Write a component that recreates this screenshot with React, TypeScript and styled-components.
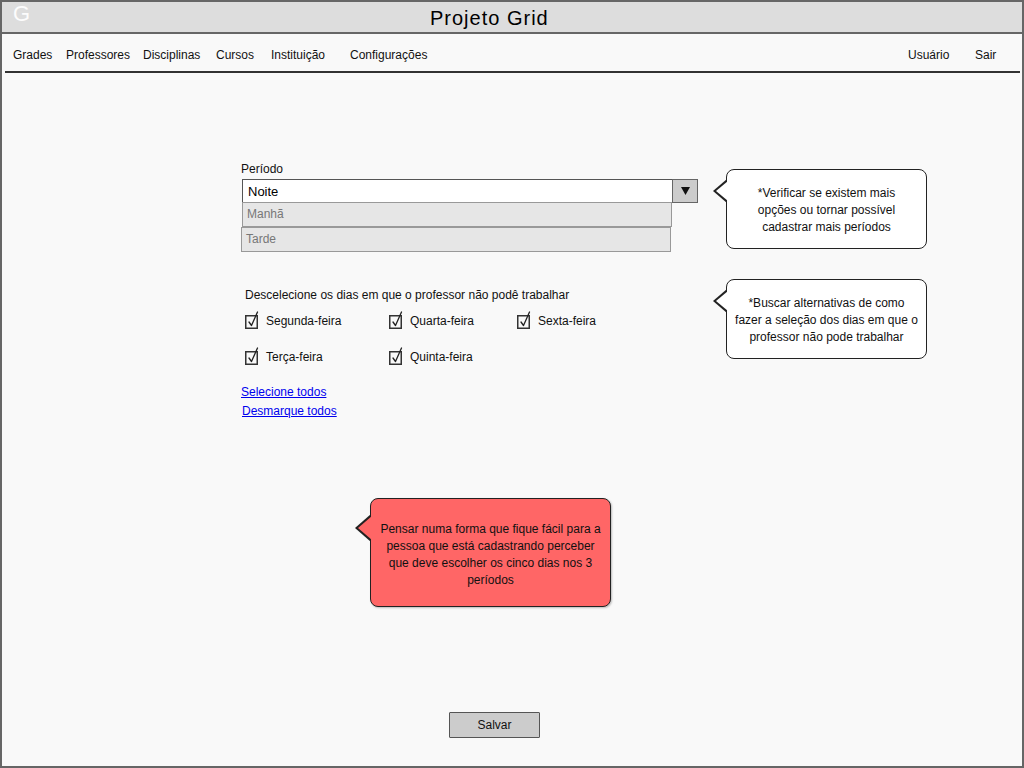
import React from 'react';
import styled, { createGlobalStyle } from 'styled-components';

const Global = createGlobalStyle`
  html, body { margin: 0; padding: 0; background: #f9f9f9; }
  body { font-family: "Liberation Sans", Arial, sans-serif; color: #111; font-size: 12px; }
  * { box-sizing: border-box; }
`;

const Frame = styled.div`
  width: 1024px;
  height: 768px;
  border: 2px solid #666;
  background: #f9f9f9;
  display: flex;
  flex-direction: column;
`;

const TitleBar = styled.header`
  height: 32px;
  flex: none;
  background: #dddddd;
  border-bottom: 2px solid #666;
  display: flex;
  align-items: center;
  padding-left: 11px;
`;

const Logo = styled.span`
  font-size: 22px;
  color: #fcfcfc;
  line-height: 1;
  width: 16px;
  margin-top: -6px;
`;

const Title = styled.h1`
  margin: 0 0 0 401px;
  font-size: 20px;
  font-weight: normal;
  letter-spacing: 1px;
  line-height: 1;
  color: #000;
  padding-top: 2px;
`;

const Nav = styled.nav`
  height: 39px;
  flex: none;
  display: flex;
  align-items: center;
  padding: 4px 0 0 8px;
  margin: 0 2px 0 3px;
  border-bottom: 2px solid #333;
`;

const NavItem = styled.span<{ $w: number }>`
  width: ${p => p.$w}px;
  flex: none;
  white-space: nowrap;
  font-size: 12px;
  color: #111;
`;

const NavRight = styled.div`
  margin-left: auto;
  display: flex;
`;

const Main = styled.main`
  flex: 1;
  display: flex;
  flex-direction: column;
  padding: 89px 0 0 240px;
`;

const Row = styled.section<{ $mt?: number }>`
  display: grid;
  grid-template-columns: 456px 201px;
  column-gap: 28px;
  align-items: start;
  margin-top: ${p => p.$mt ?? 0}px;
`;

const Field = styled.div`
  display: flex;
  flex-direction: column;
`;

const Label = styled.label`
  line-height: 15px;
  margin-left: -1px;
  margin-bottom: 2px;
`;

const SelectBox = styled.div`
  display: flex;
  height: 24px;
`;

const SelectValue = styled.div`
  flex: 1;
  background: #fff;
  border: 1px solid #555;
  border-right: none;
  padding: 2px 0 0 5px;
  font-size: 13px;
  line-height: 20px;
  color: #000;
`;

const ArrowBtn = styled.div`
  width: 26px;
  background: #cccccc;
  border: 1.5px solid #666;
  display: flex;
  align-items: center;
  justify-content: center;
`;

const Option = styled.div<{ $shift?: number; $overlap?: boolean }>`
  width: 430px;
  height: 25px;
  margin-top: ${p => (p.$overlap ? -1 : 0)}px;
  margin-left: ${p => p.$shift ?? 0}px;
  background: #e6e6e6;
  border: 1px solid #999;
  padding-left: 4px;
  font-size: 12px;
  line-height: 23px;
  color: #777;
`;

const Callout = styled.div<{ $mt?: number }>`
  position: relative;
  margin-top: ${p => p.$mt ?? 0}px;
  height: 80px;
  padding-top: 3px;
  background: #fff;
  border: 1.5px solid #222;
  border-radius: 8px;
  display: flex;
  align-items: center;
  justify-content: center;
  text-align: center;
  line-height: 17px;
  font-size: 12px;
  color: #111;

  &::before {
    content: '';
    position: absolute;
    left: -14px;
    top: 9px;
    border-right: 14px solid #222;
    border-top: 12px solid transparent;
    border-bottom: 12px solid transparent;
  }
  &::after {
    content: '';
    position: absolute;
    left: -11.5px;
    top: 10.5px;
    border-right: 12.5px solid #fff;
    border-top: 10.5px solid transparent;
    border-bottom: 10.5px solid transparent;
  }
`;

const Days = styled.div`
  display: flex;
  flex-direction: column;
  padding-top: 9px;
`;

const DaysTitle = styled.div`
  line-height: 15px;
  margin-left: 3px;
`;

const CheckGrid = styled.div`
  display: grid;
  grid-template-columns: 144px 128px 120px;
  row-gap: 20px;
  margin: 10px 0 0 3px;
`;

const CheckItem = styled.label`
  display: flex;
  align-items: flex-end;
  height: 16px;
  gap: 5px;
  line-height: 15px;
  white-space: nowrap;
`;

const LinkList = styled.div`
  display: flex;
  flex-direction: column;
  gap: 4px;
  margin-top: 20px;
`;

const TextLink = styled.a<{ $shift?: number }>`
  color: #0000ee;
  text-decoration: underline;
  line-height: 15px;
  margin-left: ${p => p.$shift ?? 0}px;
  cursor: pointer;
`;

const Warning = styled.div`
  position: relative;
  margin: 79px 0 0 128px;
  width: 241px;
  height: 109px;
  padding-top: 5px;
  background: #ff6666;
  border: 1.5px solid #222;
  border-radius: 8px;
  box-shadow: 1px 1px 2px rgba(0,0,0,0.25);
  display: flex;
  align-items: center;
  justify-content: center;
  text-align: center;
  line-height: 17px;
  font-size: 12px;
  color: #111;

  &::before {
    content: '';
    position: absolute;
    left: -16px;
    top: 15px;
    border-right: 16px solid #222;
    border-top: 14px solid transparent;
    border-bottom: 14px solid transparent;
  }
  &::after {
    content: '';
    position: absolute;
    left: -13.5px;
    top: 16.5px;
    border-right: 14.5px solid #ff6666;
    border-top: 12.5px solid transparent;
    border-bottom: 12.5px solid transparent;
  }
`;

const SaveButton = styled.button`
  margin: 105px 0 0 207px;
  width: 91px;
  height: 26px;
  background: #cccccc;
  border: 1.5px solid #555;
  border-radius: 1px;
  font-family: "Liberation Sans", Arial, sans-serif;
  font-size: 12px;
  color: #111;
  padding: 0;
`;

const CheckIcon = () => (
  <svg width="16" height="18" viewBox="0 0 16 18" style={{ flex: 'none' }}>
    <rect x="0.75" y="4.75" width="11.5" height="12.5" fill="none" stroke="#333" strokeWidth="1.5" />
    <path d="M4 11 L6.5 14.5 L12.5 1" fill="none" stroke="#222" strokeWidth="1.3" strokeLinecap="round" strokeLinejoin="round" />
  </svg>
);

const DownArrow = () => (
  <svg width="9" height="8" viewBox="0 0 9 8">
    <path d="M0 0 L9 0 L4.5 8 Z" fill="#111" />
  </svg>
);

const days = [
  'Segunda-feira',
  'Quarta-feira',
  'Sexta-feira',
  'Terça-feira',
  'Quinta-feira',
];

export default function App() {
  return (
    <>
      <Global />
      <Frame>
        <TitleBar>
          <Logo>G</Logo>
          <Title>Projeto Grid</Title>
        </TitleBar>
        <Nav>
          <NavItem $w={53}>Grades</NavItem>
          <NavItem $w={77}>Professores</NavItem>
          <NavItem $w={73}>Disciplinas</NavItem>
          <NavItem $w={55}>Cursos</NavItem>
          <NavItem $w={79}>Instituição</NavItem>
          <NavItem $w={90}>Configurações</NavItem>
          <NavRight>
            <NavItem $w={67}>Usuário</NavItem>
            <NavItem $w={45}>Sair</NavItem>
          </NavRight>
        </Nav>
        <Main>
          <Row>
            <Field>
              <Label>Período</Label>
              <SelectBox>
                <SelectValue>Noite</SelectValue>
                <ArrowBtn><DownArrow /></ArrowBtn>
              </SelectBox>
              <Option $overlap>Manhã</Option>
              <Option $shift={-1}>Tarde</Option>
            </Field>
            <Callout $mt={7}>
              *Verificar se existem mais<br />opções ou tornar possível<br />cadastrar mais períodos
            </Callout>
          </Row>
          <Row $mt={27}>
            <Days>
              <DaysTitle>Descelecione os dias em que o professor não podê trabalhar</DaysTitle>
              <CheckGrid>
                {days.map(d => (
                  <CheckItem key={d}>
                    <CheckIcon />
                    {d}
                  </CheckItem>
                ))}
              </CheckGrid>
              <LinkList>
                <TextLink $shift={-1}>Selecione todos</TextLink>
                <TextLink>Desmarque todos</TextLink>
              </LinkList>
            </Days>
            <Callout>
              *Buscar alternativas de como<br />fazer a seleção dos dias em que o<br />professor não pode trabalhar
            </Callout>
          </Row>
          <Warning>
            Pensar numa forma que fique fácil para a<br />pessoa que está cadastrando perceber<br />que deve escolher os cinco dias nos 3<br />períodos
          </Warning>
          <SaveButton>Salvar</SaveButton>
        </Main>
      </Frame>
    </>
  );
}
